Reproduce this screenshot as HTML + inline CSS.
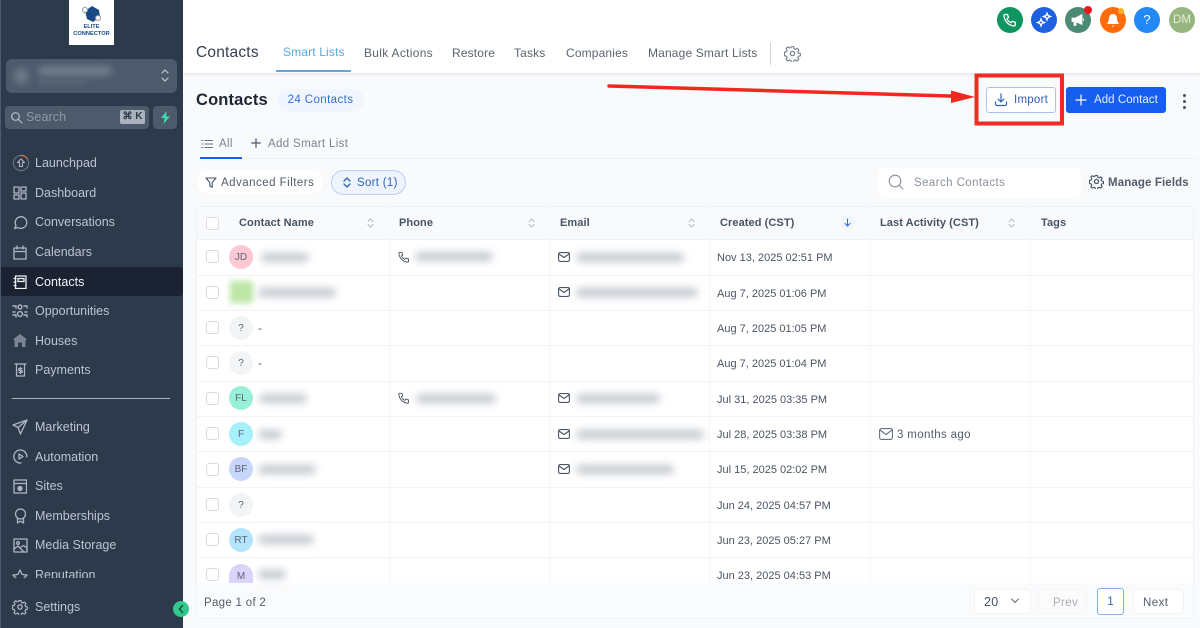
<!DOCTYPE html>
<html lang="en"><head><meta charset="utf-8"><title>Contacts</title>
<style>
*{box-sizing:border-box}
html,body{margin:0;padding:0;width:1200px;height:628px;overflow:hidden;background:#f9fafb;font-family:"Liberation Sans",sans-serif}
.a,.t,svg.i,.b{position:absolute}
.t{white-space:nowrap;line-height:16px}
.nav{left:35px;color:#bcc4d0;font-size:12.5px;letter-spacing:0}
svg.i{fill:none;stroke:#aeb6c3;stroke-width:1.5;stroke-linecap:round;stroke-linejoin:round}
.tab{top:45px;font-size:12px;letter-spacing:.15px;color:#5b6472}
.th{top:215px;font-size:11px;font-weight:bold;letter-spacing:.08px;color:#475467}
.d{left:717px;font-size:11px;letter-spacing:0;color:#4b5563}
.hl{height:1px;left:197px;width:997px;background:#f2f3f5}
.vl{width:1px;top:206px;height:377px;background:#f5f6f8}
.cb{left:206px;width:13px;height:13px;border:1.2px solid #d9dbe0;border-radius:3px;background:#fff}
.av{left:229px;width:24px;height:24px;border-radius:50%;font-size:10px;line-height:25px;text-align:center;color:#5d6675}
.b{height:9px;border-radius:5px;background:#8b94a3;filter:blur(4px);opacity:.5}
.c{top:7px;width:26px;height:26px;border-radius:50%}
svg.s{position:absolute;fill:none;stroke:#b3b8c1;stroke-width:1;stroke-linecap:round;stroke-linejoin:round}
</style></head><body>

<!-- top bar -->
<div class="a" style="left:183px;top:0;width:1017px;height:73px;background:#fff;box-shadow:0 1px 4px rgba(16,24,40,.12)"></div>

<!-- sidebar -->
<div class="a" style="left:0;top:0;width:183px;height:628px;background:#2d3a4c;border-left:1px solid #4b5a70"></div>
<div class="a" style="left:69px;top:0;width:45px;height:45px;background:#fff"></div>
<svg class="a" style="left:80px;top:5px" width="24" height="18" viewBox="0 0 24 18"><path d="M5 6 12 1l7 4 1 7-7 5-6-3z" fill="#1c4a86"/><circle cx="5" cy="5" r="2.5" fill="#fff" stroke="#8a94a3"/><circle cx="18" cy="13" r="2.5" fill="#fff" stroke="#8a94a3"/></svg>
<div class="t" style="left:69px;top:24px;width:45px;text-align:center;font-size:5.7px;line-height:7px;font-weight:bold;color:#1c4a86">ELITE<br>CONNECTOR</div>

<div class="a" style="left:6px;top:59px;width:171px;height:34px;border-radius:6px;background:#4d5a6c"></div>
<div class="a" style="left:14px;top:68px;width:15px;height:16px;border-radius:50%;background:#6f7a8a;filter:blur(4px)"></div>
<div class="a" style="left:38px;top:67px;width:74px;height:8px;border-radius:4px;background:#7a8595;filter:blur(4px)"></div>
<div class="a" style="left:38px;top:80px;width:50px;height:4px;border-radius:4px;background:#5f6b7c;filter:blur(3px)"></div>
<svg class="i" style="left:160px;top:68px;stroke:#c2c8d1;stroke-width:1.2" width="10" height="15" viewBox="0 0 10 15"><path d="M2 5l3-3 3 3M2 10l3 3 3-3"/></svg>

<div class="a" style="left:5px;top:106px;width:144px;height:23px;border-radius:4px;background:#4d5a6c"></div>
<svg class="i" style="left:10px;top:111px;stroke:#b6bdc8;stroke-width:1.2" width="13" height="13" viewBox="0 0 13 13"><circle cx="5.5" cy="5.5" r="3.8"/><path d="M8.5 8.500 12 12"/></svg>
<div class="t" style="left:26px;top:109px;font-size:12.5px;letter-spacing:.1px;color:#8e98a7">Search</div>
<div class="t" style="left:120px;top:110px;width:25px;height:14px;line-height:14px;background:#aab2bd;border-radius:2px;text-align:center;font-size:10px;font-weight:bold;color:#2d3a4c">⌘ K</div>
<div class="a" style="left:153px;top:106px;width:24px;height:23px;border-radius:4px;background:#4d5a6c"></div>
<svg class="a" style="left:160px;top:111px" width="11" height="13" viewBox="0 0 11 13"><path d="M6.500 0 1 7h3.500L3.500 13 10 5.500H6.300z" fill="#3fd9ac"/></svg>

<svg class="i" style="left:12px;top:154px;stroke-width:1.1" width="18" height="18" viewBox="0 0 18 18"><circle cx="9" cy="9" r="7.600" stroke="#6b7686"/><path d="M9 1.400A7.600 7.600 0 0 1 15.500 5" stroke="#d9773f"/><path d="M9 5 5.500 8.500H7.500V12.500H10.500V8.500H12.500z"/></svg>
<div class="t nav" style="top:155px">Launchpad</div>
<svg class="i" style="left:13px;top:186px;stroke-width:1.3" width="14" height="14" viewBox="0 0 14 14"><path d="M1 1h5v6H1zM8 1h5v4H8zM8 7h5v6H8zM1 9h5v4H1z"/></svg>
<div class="t nav" style="top:185px">Dashboard</div>
<svg class="i" style="left:13px;top:215px;stroke-width:1.3" width="15" height="15" viewBox="0 0 15 15"><path d="M1.500 13.500 3 10.500A5.800 5.800 0 1 1 5 12.500z"/></svg>
<div class="t nav" style="top:214px">Conversations</div>
<svg class="i" style="left:13px;top:245px;stroke-width:1.3" width="14" height="15" viewBox="0 0 14 15"><path d="M1 3h12v11H1zM1 6.500h12M4 1v3M10 1v3"/></svg>
<div class="t nav" style="top:244px">Calendars</div>

<div class="a" style="left:1px;top:267px;width:182px;height:29px;background:#1b2333;border-radius:0 3px 3px 0"></div>
<svg class="i" style="left:13px;top:275px;stroke:#eef0f3;stroke-width:1.3" width="14" height="14" viewBox="0 0 14 14"><path d="M2.500 1H13v12.500H2.500zM5 3.500h6v3H5zM1 3.500h2M1 7h2M1 10.500h2"/></svg>
<div class="t nav" style="top:274px;color:#f2f4f7">Contacts</div>

<svg class="i" style="left:12px;top:304px;stroke-width:1.4" width="16" height="14" viewBox="0 0 16 14"><path d="M1 2h3v2M1 11h3v2M12 2h3v2M12 11h3v2"/><circle cx="8" cy="3" r="2"/><circle cx="8" cy="10" r="2.400"/><path d="M1 8h2M13 8h2"/></svg>
<div class="t nav" style="top:303px">Opportunities</div>
<svg class="a" style="left:13px;top:334px" width="14" height="13" viewBox="0 0 14 13"><path d="M7 0 0 5.500 1.500 6V13h3.500V8.500H9V13h3.500V6L14 5.500z" fill="#7b8594"/></svg>
<div class="t nav" style="top:333px">Houses</div>
<svg class="i" style="left:14px;top:363px;stroke-width:1.2" width="13" height="14" viewBox="0 0 13 14"><path d="M1 1h11M2.500 1v12h8V1M6.500 4.500v6M8 5.500H5.600a1 1 0 0 0 0 2h1.800a1 1 0 0 1 0 2H5"/></svg>
<div class="t nav" style="top:362px">Payments</div>

<div class="a" style="left:12px;top:398px;width:158px;height:1px;background:#a9b1be"></div>

<svg class="i" style="left:12px;top:419px;stroke-width:1.3" width="16" height="16" viewBox="0 0 16 16"><path d="M15 1 1 6l5 2.500L8.500 15zM15 1 6 8.500"/></svg>
<div class="t nav" style="top:419px">Marketing</div>
<svg class="i" style="left:13px;top:449px;stroke-width:1.3" width="15" height="15" viewBox="0 0 15 15"><path d="M13.800 8A6.500 6.500 0 1 0 8 14M7.500 1A6.500 6.500 0 0 1 13.800 6"/><path d="M6 5l4 2.500L6 10z"/></svg>
<div class="t nav" style="top:449px">Automation</div>
<svg class="i" style="left:13px;top:479px;stroke-width:1.300" width="14" height="15" viewBox="0 0 14 15"><path d="M1 1h12.500v13H1zM1 4.500h12.500"/><circle cx="7" cy="9.500" r="2" fill="#aeb6c3"/></svg>
<div class="t nav" style="top:478px">Sites</div>
<svg class="i" style="left:14px;top:508px;stroke-width:1.300" width="13" height="16" viewBox="0 0 13 16"><circle cx="6.500" cy="6" r="5"/><path d="M3.500 10.500V15l3-1.800 3 1.800v-4.500"/></svg>
<div class="t nav" style="top:508px">Memberships</div>
<svg class="i" style="left:13px;top:538px;stroke-width:1.300" width="15" height="15" viewBox="0 0 15 15"><path d="M1 1h13v13H1z"/><circle cx="5" cy="5" r="1.300"/><path d="M1 11l4-3 6 6M8 9l2.500-1.500L14 10"/></svg>
<div class="t nav" style="top:537px">Media Storage</div>
<div class="a" style="left:0;top:568px;width:183px;height:10px;overflow:hidden">
<svg class="i" style="left:12px;top:1px;stroke-width:1.300" width="16" height="15" viewBox="0 0 16 15"><path d="M8 1l2.100 4.400 4.900.7-3.500 3.400.8 4.800L8 12.100l-4.300 2.200.8-4.800L1 6.100l4.900-.7z"/></svg>
<div class="t nav" style="top:-1px">Reputation</div></div>
<svg class="i" style="left:12px;top:599px;stroke-width:1.300" width="16" height="16" viewBox="0 0 16 16"><circle cx="8" cy="8" r="2.200"/><path d="M6.800 1h2.400l.4 2 1.500.7 1.800-1.100 1.700 1.700-1.100 1.800.7 1.500 2 .4v2.400l-2 .4-.7 1.500 1.100 1.800-1.700 1.700-1.800-1.100-1.500.7-.4 2H6.800l-.4-2-1.500-.7-1.800 1.100-1.700-1.700 1.100-1.800-.7-1.500-2-.4V6.600l2-.4.700-1.500-1.100-1.800 1.700-1.700 1.800 1.100 1.500-.7z" transform="translate(.7 .7) scale(.91)"/></svg>
<div class="t nav" style="top:599px">Settings</div>
<div class="a" style="left:173px;top:601px;width:16px;height:16px;border-radius:50%;background:#2fc98f"></div>
<svg class="i" style="left:177px;top:604px;stroke:#14532d" width="8" height="10" viewBox="0 0 8 10"><path d="M5.500 1.500 2.500 5l3 3.500"/></svg>

<!-- top icons -->
<div class="a c" style="left:997px;background:#0f9560"></div>
<svg class="i" style="left:1003px;top:13px;stroke:#fff;stroke-width:1.300" width="14" height="14" viewBox="0 0 14 14"><path d="M2 1.500h2.500l1 3-1.500 1.200a7 7 0 0 0 4 4l1.300-1.500 3 1V12a1 1 0 0 1-1.200 1C5.500 12.500 1.500 8 1 2.800A1 1 0 0 1 2 1.500z"/></svg>
<div class="a c" style="left:1031px;background:#1f60e0"></div>
<svg class="a" style="left:1036px;top:12px" width="16" height="16" viewBox="0 0 16 16"><path d="M11 1l1 2.500 2.500 1-2.500 1-1 2.500-1-2.500-2.500-1 2.500-1zM5 7l1 2.500 2.500 1-2.500 1-1 2.500-1-2.500-2.500-1 2.500-1z" fill="none" stroke="#fff" stroke-width="1.300"/></svg>
<div class="a c" style="left:1065px;background:#4b8a73"></div>
<svg class="a" style="left:1071px;top:13px" width="14" height="14" viewBox="0 0 14 14"><path d="M1 5h3.500L11 1.500v10L4.500 8.500H1zM3 9v3.500h2V9M12.500 5v3" fill="#fff" stroke="#fff" stroke-width=".8"/></svg>
<div class="a" style="left:1084px;top:6px;width:8px;height:8px;border-radius:50%;background:#f0141e"></div>
<div class="a c" style="left:1100px;background:#ff6a0a"></div>
<svg class="a" style="left:1106px;top:13px" width="14" height="15" viewBox="0 0 14 15"><path d="M7 1a4 4 0 0 0-4 4c0 4-2 5-2 6h12c0-1-2-2-2-6a4 4 0 0 0-4-4zM5.500 12.500a1.600 1.600 0 0 0 3 0" fill="#fff"/></svg>
<div class="a" style="left:1118px;top:8px;width:6px;height:6px;border-radius:50%;background:#fdb022"></div>
<div class="a c" style="left:1134px;background:#2188f5;color:#fff;font-size:13px;line-height:26px;text-align:center">?</div>
<div class="a c" style="left:1169px;background:#97b57f;color:#e8efe1;font-size:11.500px;line-height:26px;text-align:center">DM</div>

<!-- tabs -->
<div class="t" style="left:196px;top:45px;font-size:15.500px;letter-spacing:.2px;color:#344054">Contacts</div>
<div class="t tab" style="left:283px;top:44px;color:#5aa9d9">Smart Lists</div>
<div class="a" style="left:276px;top:70px;width:75px;height:2px;background:#5aa9d9"></div>
<div class="t tab" style="left:364px;letter-spacing:.3px">Bulk Actions</div>
<div class="t tab" style="left:452px">Restore</div>
<div class="t tab" style="left:514px">Tasks</div>
<div class="t tab" style="left:566px">Companies</div>
<div class="t tab" style="left:648px">Manage Smart Lists</div>
<div class="a" style="left:770px;top:42px;width:1px;height:23px;background:#d0d5dd"></div>
<svg class="i" style="left:784px;top:45px;stroke:#7a8391;stroke-width:1.200" width="17" height="17" viewBox="0 0 16 16"><circle cx="8" cy="8" r="2"/><path d="M6.800 1h2.400l.4 2 1.500.7 1.800-1.100 1.700 1.700-1.100 1.800.7 1.500 2 .4v2.400l-2 .4-.7 1.500 1.100 1.800-1.700 1.700-1.800-1.100-1.500.7-.4 2H6.800l-.4-2-1.500-.7-1.800 1.100-1.700-1.700 1.100-1.800-.7-1.500-2-.4V6.600l2-.4.700-1.500-1.100-1.800 1.700-1.700 1.800 1.100 1.500-.7z" transform="translate(.7 .7) scale(.91)"/></svg>

<!-- page header -->
<div class="t" style="left:196px;top:92px;font-size:16.500px;font-weight:bold;letter-spacing:.15px;color:#1d2433">Contacts</div>
<div class="t" style="left:277px;top:89px;width:87px;height:23px;line-height:23px;border-radius:12px;background:#f1f6fe;text-align:center;font-size:11.500px;letter-spacing:.4px;color:#2f6fdb">24 Contacts</div>

<div class="a" style="left:986px;top:87px;width:70px;height:26px;border:1px solid #a9c4f0;border-radius:3px;background:#fff"></div>
<svg class="i" style="left:994px;top:93px;stroke:#2f62b8;stroke-width:1.200" width="14" height="14" viewBox="0 0 14 14"><path d="M7 1v7.500M4 6l3 3 3-3M1.500 9v2a1.500 1.500 0 0 0 1.500 1.500h8a1.500 1.500 0 0 0 1.500-1.500V9"/></svg>
<div class="t" style="left:1014px;top:92px;font-size:11.500px;letter-spacing:.25px;color:#2f62b8">Import</div>
<div class="a" style="left:1066px;top:87px;width:100px;height:26px;background:#155eef;border-radius:3px"></div>
<svg class="i" style="left:1075px;top:94px;stroke:#fff;stroke-width:1.200" width="12" height="12" viewBox="0 0 12 12"><path d="M6 1v10M1 6h10"/></svg>
<div class="t" style="left:1094px;top:92px;font-size:11.500px;letter-spacing:.05px;color:#e6eefc">Add Contact</div>
<div class="a" style="left:1182.500px;top:93.500px;width:3px;height:3px;border-radius:50%;background:#475467;box-shadow:0 6px 0 #475467,0 12px 0 #475467"></div>

<!-- red annotation -->
<svg class="a" style="left:0;top:0" width="1200" height="628"><path d="M609 86 958 96.300" stroke="#f0281e" stroke-width="3.500" stroke-linecap="round" fill="none"/><path d="M951 90.500 975 97 951 103z" fill="#f0281e"/><rect x="976.500" y="75.500" width="85.500" height="48" fill="none" stroke="#ef2b22" stroke-width="4"/></svg>

<!-- smart list tabs -->
<div class="a" style="left:197px;top:158px;width:1000px;height:1px;background:#f0f1f4"></div>
<svg class="i" style="left:201px;top:138px;stroke:#667085;stroke-width:1.100" width="12" height="12" viewBox="0 0 12 12"><path d="M4 2.500h7.500M4 6h7.500M4 9.500h7.500M.8 2.500h1M.8 6h1M.8 9.500h1"/></svg>
<div class="t" style="left:219px;top:136px;font-size:11.500px;letter-spacing:.3px;color:#7a8391">All</div>
<div class="a" style="left:200px;top:157px;width:42px;height:2px;background:#155eef"></div>
<svg class="i" style="left:251px;top:138px;stroke:#475467;stroke-width:1.200" width="10" height="10" viewBox="0 0 10 10"><path d="M5 .8v8.400M.8 5h8.400"/></svg>
<div class="t" style="left:268px;top:136px;font-size:11.500px;letter-spacing:.35px;color:#7a8391">Add Smart List</div>

<!-- filters -->
<div class="a" style="left:197px;top:170px;width:126px;height:24px;border-radius:12px;background:#fff"></div>
<svg class="i" style="left:205px;top:177px;stroke:#475467;stroke-width:1.100" width="12" height="11" viewBox="0 0 12 11"><path d="M1 1h10L7.200 5.500v4.800L4.800 9V5.500z"/></svg>
<div class="t" style="left:221px;top:175px;font-size:11.500px;letter-spacing:.48px;color:#535c6b">Advanced Filters</div>
<div class="a" style="left:331px;top:170px;width:75px;height:25px;border-radius:13px;background:#eef3fd;border:1px solid #bdd0f2"></div>
<svg class="i" style="left:343px;top:177px;stroke:#2f62b8;stroke-width:1.300" width="8" height="11" viewBox="0 0 8 11"><path d="M1 4l3-3 3 3M1 7l3 3 3-3"/></svg>
<div class="t" style="left:357px;top:175px;font-size:11.500px;letter-spacing:.3px;color:#2f62b8">Sort (1)</div>
<div class="a" style="left:878px;top:168px;width:203px;height:29px;border-radius:6px;background:#fff"></div>
<svg class="i" style="left:888px;top:174px;stroke:#8a919d;stroke-width:1.100" width="16" height="16" viewBox="0 0 16 16"><circle cx="7" cy="7" r="5.800"/><path d="M11.500 11.500 15 15"/></svg>
<div class="t" style="left:914px;top:175px;font-size:11.500px;letter-spacing:.42px;color:#8a919d">Search Contacts</div>
<svg class="i" style="left:1089px;top:174px;stroke:#475467;stroke-width:1.300" width="15" height="15" viewBox="0 0 16 16"><circle cx="8" cy="8" r="2.200"/><path d="M6.800 1h2.400l.4 2 1.500.7 1.800-1.100 1.700 1.700-1.100 1.800.7 1.500 2 .4v2.400l-2 .4-.7 1.500 1.100 1.800-1.700 1.700-1.800-1.100-1.500.7-.4 2H6.800l-.4-2-1.500-.7-1.800 1.100-1.700-1.700 1.100-1.800-.7-1.500-2-.4V6.600l2-.4.700-1.500-1.100-1.800 1.700-1.700 1.800 1.100 1.500-.7z" transform="translate(.7 .7) scale(.91)"/></svg>
<div class="t" style="left:1108px;top:175px;font-size:11.500px;font-weight:bold;letter-spacing:.12px;color:#535c6b">Manage Fields</div>

<!-- table -->
<div class="a" style="left:196px;top:206px;width:998px;height:413px;background:#fff;border:1px solid #f0f1f4;border-radius:4px"></div>
<div class="a" style="left:197px;top:207px;width:996px;height:33px;background:#f9fafb;border-bottom:1px solid #f0f1f4"></div>
<div class="a" style="left:197px;top:583px;width:996px;height:35px;background:#fafbfc"></div>
<div class="a vl" style="left:389px"></div><div class="a vl" style="left:549px"></div><div class="a vl" style="left:709px"></div><div class="a vl" style="left:870px"></div><div class="a vl" style="left:1030px"></div>

<div class="a cb" style="top:217px"></div>
<div class="t th" style="left:239px">Contact Name</div>
<div class="t th" style="left:399px">Phone</div>
<div class="t th" style="left:560px">Email</div>
<div class="t th" style="left:720px">Created (CST)</div>
<div class="t th" style="left:880px">Last Activity (CST)</div>
<div class="t th" style="left:1041px">Tags</div>
<svg class="s" style="left:367px;top:218px" width="7" height="10" viewBox="0 0 7 10"><path d="M1 3.500 3.500 1 6 3.500M1 6.500 3.500 9 6 6.500"/></svg>
<svg class="s" style="left:528px;top:218px" width="7" height="10" viewBox="0 0 7 10"><path d="M1 3.500 3.500 1 6 3.500M1 6.500 3.500 9 6 6.500"/></svg>
<svg class="s" style="left:688px;top:218px" width="7" height="10" viewBox="0 0 7 10"><path d="M1 3.500 3.500 1 6 3.500M1 6.500 3.500 9 6 6.500"/></svg>
<svg class="s" style="left:1008px;top:218px" width="7" height="10" viewBox="0 0 7 10"><path d="M1 3.500 3.500 1 6 3.500M1 6.500 3.500 9 6 6.500"/></svg>
<div class="a" style="left:840px;top:215px;width:15px;height:15px;border-radius:50%;background:#f0f4fc"></div>
<svg class="s" style="left:844px;top:218px;stroke:#2f6fdb" width="7" height="9" viewBox="0 0 7 9"><path d="M3.500 1v7M1 5.500 3.500 8 6 5.500"/></svg>

<!-- row lines -->
<div class="a hl" style="top:275px"></div><div class="a hl" style="top:310px"></div><div class="a hl" style="top:345px"></div><div class="a hl" style="top:381px"></div><div class="a hl" style="top:416px"></div><div class="a hl" style="top:451px"></div><div class="a hl" style="top:487px"></div><div class="a hl" style="top:522px"></div><div class="a hl" style="top:557px"></div>

<!-- checkboxes -->
<div class="a cb" style="top:250px"></div><div class="a cb" style="top:286px"></div><div class="a cb" style="top:321px"></div><div class="a cb" style="top:356px"></div><div class="a cb" style="top:392px"></div><div class="a cb" style="top:427px"></div><div class="a cb" style="top:463px"></div><div class="a cb" style="top:498px"></div><div class="a cb" style="top:533px"></div><div class="a cb" style="top:568px"></div>

<!-- avatars -->
<div class="a av" style="top:245px;background:#fbc8d4">JD</div>
<div class="a" style="left:230px;top:281px;width:23px;height:22px;background:#bde6a6;filter:blur(3px)"></div>
<div class="a av" style="top:316px;background:#f3f4f6">?</div>
<div class="a av" style="top:351px;background:#f3f4f6">?</div>
<div class="a av" style="top:386px;background:#99f0d8">FL</div>
<div class="a av" style="top:422px;background:#a5f0fa">F</div>
<div class="a av" style="top:457px;background:#c9d6fb">BF</div>
<div class="a av" style="top:493px;background:#f3f4f6">?</div>
<div class="a av" style="top:528px;background:#b4e4fb">RT</div>
<div class="a av" style="top:564px;height:19px;border-radius:12px 12px 0 0;background:#dcd3fa;overflow:hidden">M</div>

<!-- blurred names -->
<div class="b" style="left:261px;top:253px;width:48px"></div>
<div class="b" style="left:258px;top:288px;width:78px"></div>
<div class="t" style="left:258px;top:320px;font-size:12px;color:#5b6472">-</div>
<div class="t" style="left:258px;top:355px;font-size:12px;color:#5b6472">-</div>
<div class="b" style="left:259px;top:394px;width:48px"></div>
<div class="b" style="left:258px;top:430px;width:24px"></div>
<div class="b" style="left:258px;top:465px;width:58px"></div>
<div class="b" style="left:258px;top:535px;width:56px"></div>
<div class="b" style="left:258px;top:570px;width:28px"></div>

<!-- phones -->
<svg class="i" style="left:398px;top:251px;stroke:#4b5563;stroke-width:1.100" width="12" height="12" viewBox="0 0 14 14"><path d="M2 1.500h2.500l1 3-1.500 1.200a7 7 0 0 0 4 4l1.300-1.500 3 1V12a1 1 0 0 1-1.200 1C5.500 12.500 1.500 8 1 2.800A1 1 0 0 1 2 1.500z"/></svg>
<div class="b" style="left:415px;top:252px;width:78px"></div>
<svg class="i" style="left:398px;top:392px;stroke:#4b5563;stroke-width:1.100" width="12" height="12" viewBox="0 0 14 14"><path d="M2 1.500h2.500l1 3-1.500 1.200a7 7 0 0 0 4 4l1.300-1.500 3 1V12a1 1 0 0 1-1.200 1C5.500 12.500 1.500 8 1 2.800A1 1 0 0 1 2 1.500z"/></svg>
<div class="b" style="left:416px;top:394px;width:80px"></div>

<!-- emails -->
<svg class="i" style="left:558px;top:252px;stroke:#4b5563;stroke-width:1.100" width="12" height="10" viewBox="0 0 12 10"><rect x=".6" y=".6" width="10.800" height="8.800" rx="1.500"/><path d="M1 2l5 3.500L11 2"/></svg>
<div class="b" style="left:576px;top:253px;width:108px"></div>
<svg class="i" style="left:558px;top:287px;stroke:#4b5563;stroke-width:1.100" width="12" height="10" viewBox="0 0 12 10"><rect x=".6" y=".6" width="10.800" height="8.800" rx="1.500"/><path d="M1 2l5 3.500L11 2"/></svg>
<div class="b" style="left:576px;top:288px;width:122px"></div>
<svg class="i" style="left:558px;top:393px;stroke:#4b5563;stroke-width:1.100" width="12" height="10" viewBox="0 0 12 10"><rect x=".6" y=".6" width="10.800" height="8.800" rx="1.500"/><path d="M1 2l5 3.500L11 2"/></svg>
<div class="b" style="left:576px;top:394px;width:84px"></div>
<svg class="i" style="left:558px;top:429px;stroke:#4b5563;stroke-width:1.100" width="12" height="10" viewBox="0 0 12 10"><rect x=".6" y=".6" width="10.800" height="8.800" rx="1.500"/><path d="M1 2l5 3.500L11 2"/></svg>
<div class="b" style="left:576px;top:430px;width:128px"></div>
<svg class="i" style="left:558px;top:464px;stroke:#4b5563;stroke-width:1.100" width="12" height="10" viewBox="0 0 12 10"><rect x=".6" y=".6" width="10.800" height="8.800" rx="1.500"/><path d="M1 2l5 3.500L11 2"/></svg>
<div class="b" style="left:576px;top:465px;width:98px"></div>

<!-- dates -->
<div class="t d" style="top:250px">Nov 13, 2025 02:51 PM</div>
<div class="t d" style="top:286px">Aug 7, 2025 01:06 PM</div>
<div class="t d" style="top:321px">Aug 7, 2025 01:05 PM</div>
<div class="t d" style="top:356px">Aug 7, 2025 01:04 PM</div>
<div class="t d" style="top:392px">Jul 31, 2025 03:35 PM</div>
<div class="t d" style="top:427px">Jul 28, 2025 03:38 PM</div>
<div class="t d" style="top:462px">Jul 15, 2025 02:02 PM</div>
<div class="t d" style="top:498px">Jun 24, 2025 04:57 PM</div>
<div class="t d" style="top:533px">Jun 23, 2025 05:27 PM</div>
<div class="t d" style="top:568px">Jun 23, 2025 04:53 PM</div>

<svg class="i" style="left:879px;top:428px;stroke:#667085;stroke-width:1.100" width="14" height="12" viewBox="0 0 14 12"><rect x=".6" y=".6" width="12.800" height="10.800" rx="1.800"/><path d="M1 2l6 4.500L13 2"/></svg>
<div class="t" style="left:897px;top:427px;font-size:11.500px;letter-spacing:.35px;color:#535c6b">3 months ago</div>

<!-- footer -->
<div class="t" style="left:204px;top:595px;font-size:11.500px;letter-spacing:.3px;color:#535c6b">Page 1 of 2</div>
<div class="a" style="left:974px;top:589px;width:57px;height:25px;background:#fff;border:1px solid #f2f3f5;border-radius:4px"></div>
<div class="t" style="left:984px;top:594px;font-size:12.500px;letter-spacing:.3px;color:#475467">20</div>
<svg class="i" style="left:1010px;top:598px;stroke:#667085;stroke-width:1.100" width="10" height="6" viewBox="0 0 10 6"><path d="M1.500 1 5 4.500 8.500 1"/></svg>
<div class="a" style="left:1038px;top:589px;width:49px;height:25px;background:#fbfbfc;border:1px solid #f4f5f7;border-radius:4px"></div>
<div class="t" style="left:1053px;top:595px;font-size:11.500px;letter-spacing:.35px;color:#a5abb5">Prev</div>
<div class="a" style="left:1097px;top:588px;width:27px;height:27px;background:#fff;border:1px solid #7fb0e6;border-radius:3px;text-align:center;line-height:25px;font-size:12px;color:#2f6fb8">1</div>
<div class="a" style="left:1133px;top:589px;width:51px;height:25px;background:#fff;border:1px solid #f2f3f5;border-radius:4px"></div>
<div class="t" style="left:1143px;top:595px;font-size:11.500px;letter-spacing:.45px;color:#535c6b">Next</div>

</body></html>
